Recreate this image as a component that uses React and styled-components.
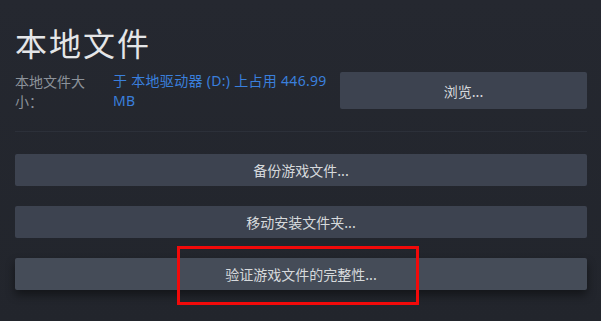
import React from 'react';
import styled, { createGlobalStyle } from 'styled-components';

const GlobalStyle = createGlobalStyle`
  html, body {
    margin: 0;
    padding: 0;
    background: #23262e;
  }
  body {
    font-family: 'Noto Sans', 'Noto Sans CJK SC', sans-serif;
  }
`;

const Page = styled.div`
  width: 601px;
  height: 321px;
  box-sizing: border-box;
  padding: 22px 14px 0 15px;
  background: linear-gradient(180deg, #252830 0%, #22252c 100%);
  overflow: hidden;
`;

const Title = styled.h1`
  margin: 0;
  font-family: 'Noto Sans CJK SC', sans-serif;
  font-size: 32px;
  line-height: 40px;
  font-weight: 400;
  letter-spacing: 2px;
  color: #e4e6e8;
`;

const SizeRow = styled.div`
  display: flex;
  align-items: flex-start;
  margin-top: 9px;
`;

const SizeLabel = styled.div`
  width: 80px;
  margin-right: 18px;
  font-family: 'Noto Sans CJK SC', sans-serif;
  font-size: 14px;
  line-height: 20px;
  color: #8c929a;
`;

const SizeValue = styled.div`
  width: 224px;
  font-size: 14px;
  line-height: 20px;
  letter-spacing: 0.3px;
  color: #3a7fdc;
`;

const Button = styled.button`
  display: flex;
  align-items: center;
  justify-content: center;
  width: ${p => p.width || '100%'};
  height: ${p => p.height || 32}px;
  padding: 0;
  border: none;
  border-radius: 2px;
  background: ${p => (p.hover ? '#454c58' : '#3d4350')};
  box-shadow: ${p => (p.hover ? '0 5px 10px rgba(0, 0, 0, 0.45)' : 'none')};
  color: #d6d9dc;
  font-family: 'Noto Sans CJK SC', sans-serif;
  font-size: 14px;
  cursor: pointer;
`;

const BrowseButton = styled(Button)`
  margin-left: auto;
  margin-top: 1px;
`;

const Divider = styled.div`
  height: 1px;
  margin: 20px 0 22px;
  background: #2c3039;
`;

const ButtonList = styled.div`
  display: flex;
  flex-direction: column;
  gap: 20px;
`;

const Highlighted = styled.div`
  position: relative;
`;

const RedBox = styled.div`
  position: absolute;
  left: 162px;
  top: -12px;
  width: 242px;
  height: 59px;
  box-sizing: border-box;
  border: 3.5px solid #f20a0a;
  pointer-events: none;
`;

export default function App() {
  return (
    <>
      <GlobalStyle />
      <Page>
        <Title>本地文件</Title>
        <SizeRow>
          <SizeLabel>本地文件大小：</SizeLabel>
          <SizeValue>于 本地驱动器 (D:) 上占用 446.99 MB</SizeValue>
          <BrowseButton width="247px" height={37}>浏览...</BrowseButton>
        </SizeRow>
        <Divider />
        <ButtonList>
          <Button>备份游戏文件...</Button>
          <Button>移动安装文件夹...</Button>
          <Highlighted>
            <Button hover>验证游戏文件的完整性...</Button>
            <RedBox />
          </Highlighted>
        </ButtonList>
      </Page>
    </>
  );
}
